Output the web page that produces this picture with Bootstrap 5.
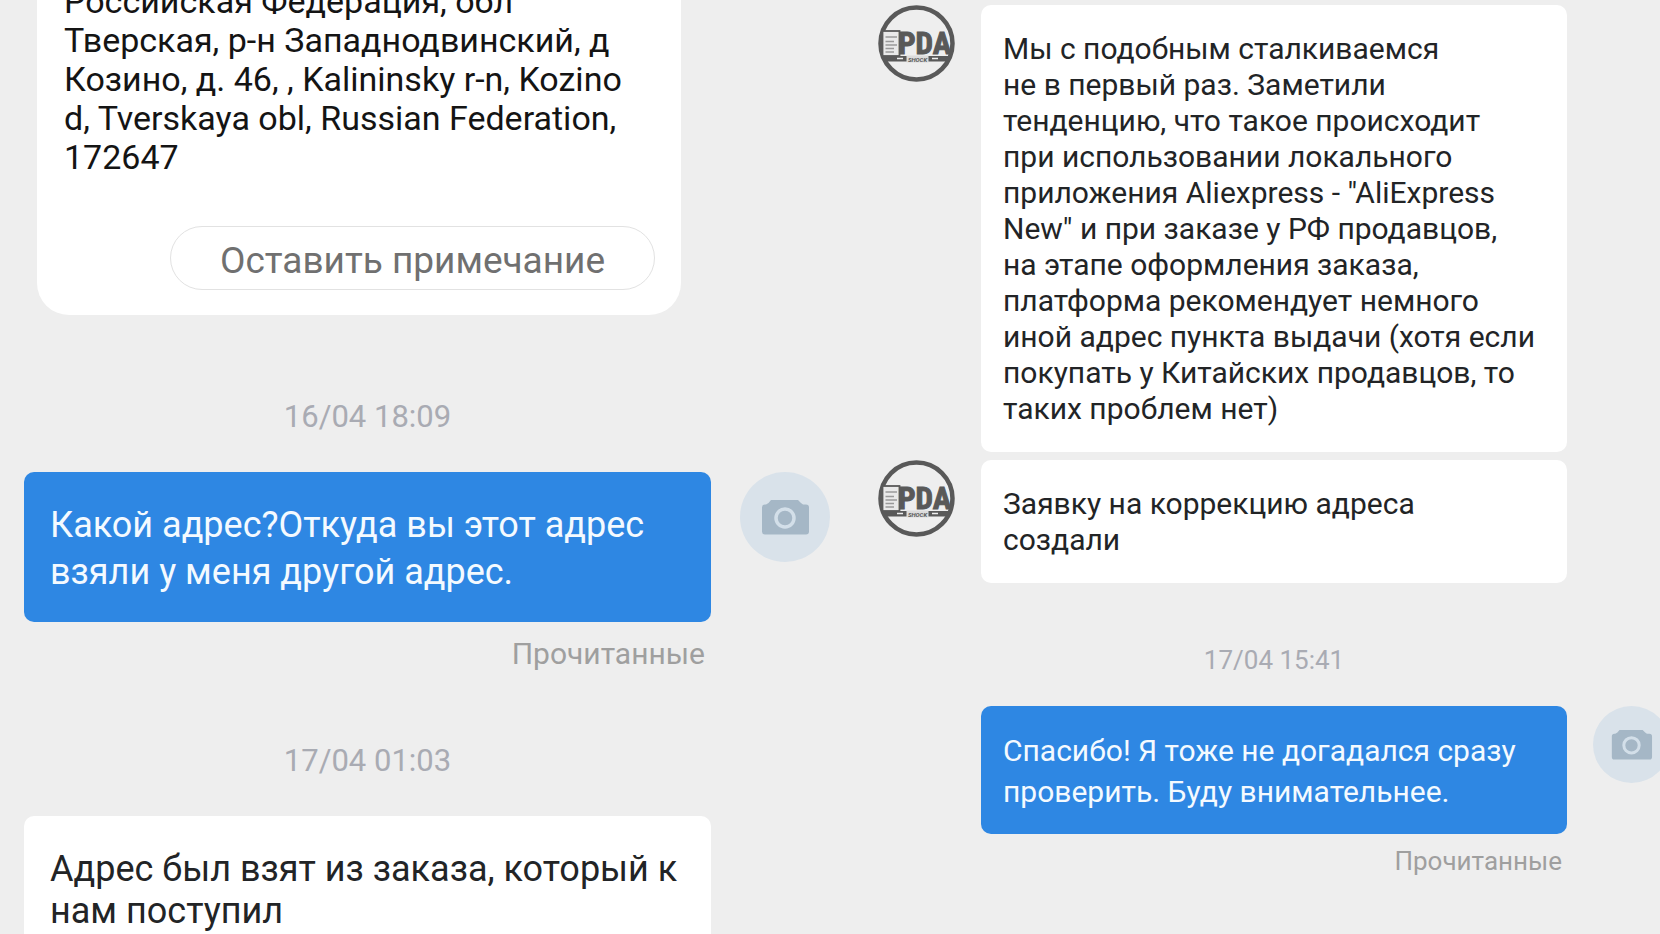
<!DOCTYPE html>
<html lang="ru">
<head>
<meta charset="utf-8">
<meta name="viewport" content="width=device-width, initial-scale=1">
<title>Переписка с продавцом</title>
<link href="https://cdn.jsdelivr.net/npm/bootstrap@5.3.0/dist/css/bootstrap.min.css" rel="stylesheet">
<style>
  body { background: #eee; font-family: Roboto, "Noto Sans", sans-serif; color: #222426; }
  .screens { height: 100vh; }
  .thread-a { padding-left: 24px; font-size: 36px; line-height: 42px; }
  .thread-b { padding: 5px 0 0 48px; margin-right: -10px; font-size: 30px; line-height: 36px; }
  .msg { display: grid; }
  .thread-a .msg { grid-template-columns: 1fr 90px; column-gap: 29px; }
  .thread-b .msg { grid-template-columns: 77px 1fr 77px; column-gap: 26px; }
  .bubble { background: #fff; border-radius: 10px; }
  .thread-a .bubble { padding: 32px 20px 28px 26px; }
  .thread-b .bubble { padding: 26px 16px 25px 22px; }
  .bubble.mine { background: #2e87e3; color: #f4faff; }
  .thread-a .mine { padding-top: 30px; padding-bottom: 26px; line-height: 47px; }
  .thread-b .mine { padding-top: 24px; padding-bottom: 22px; line-height: 41px; }
  .order { margin: -18px 30px 0 13px; padding: 0 26px 25px 27px; background: #fff; color: #141414; border-radius: 0 0 32px 32px; font-size: 34px; line-height: 39px; }
  .note-btn { width: 485px; height: 64px; margin-top: 49px; padding: 5px 0 0; border: 1px solid #e2e2e2; border-radius: 32px; background: #fff; color: #707070; font-size: 37px; line-height: 40px; }
  .stamp { color: #a9abb3; text-align: center; }
  .state { color: #9f9f9f; text-align: right; padding-right: 6px; }
  .thread-a .stamp { font-size: 31px; line-height: 36px; }
  .thread-a .state { font-size: 30px; line-height: 36px; margin-top: 14px; }
  .thread-b .stamp, .thread-b .state { font-size: 26px; line-height: 30px; }
  .thread-b .state { margin-top: 12px; padding-right: 5px; }
  .gap-order { margin-top: 84px; }
  .gap-day-a { margin-top: 71px; }
  .gap-day-b { margin-top: 62px; }
  .thread-a .gap-msg { margin-top: 37px; }
  .thread-b .gap-msg { margin-top: 31px; }
</style>
</head>
<body>
<svg class="d-none" aria-hidden="true">
  <symbol id="camera" viewBox="0 0 90 90">
    <circle cx="45" cy="45" r="45" fill="#d9e2ea"/>
    <path d="M25 32.500h1l2.500-1.500 2.500-3h27l3 3 2 1.500h3a3 3 0 0 1 3 3v24a3 3 0 0 1-3 3H25a3 3 0 0 1-3-3v-24a3 3 0 0 1 3-3z" fill="#a5b7c6"/>
    <circle cx="45" cy="46" r="9" fill="#a5b7c6" stroke="#d3dfe9" stroke-width="3.500"/>
  </symbol>
  <symbol id="shop" viewBox="0 0 77 77">
    <circle cx="38.500" cy="38.500" r="36" fill="none" stroke="#595959" stroke-width="4.500"/>
    <path d="M4 51h69l-5 5.500H9z" fill="#595959"/>
    <rect x="4.500" y="26" width="17" height="25" fill="#e9e9e9" stroke="#595959" stroke-width="1.800"/>
    <path d="M7.500 32h11.500M7.500 36.500h8.500M7.500 40h11.500M7.500 43.500h8.500M7.500 47h8.500" stroke="#999" stroke-width="1.500"/>
    <text x="20" y="48.500" font-family="Liberation Sans Narrow, Roboto Condensed, Roboto, sans-serif" font-weight="700" font-size="31" fill="#595959" stroke="#595959" stroke-width="1">PDA</text>
    <path d="M28.500 50.500h22v7h-22z" fill="#dcdcdc"/>
    <text x="39.500" y="56.500" text-anchor="middle" font-family="Roboto, sans-serif" font-weight="700" font-style="italic" font-size="6" fill="#595959">SHOCK</text>
    <path d="M19 53.500h6M54 53.500h6" stroke="#eee" stroke-width="1.500"/>
  </symbol>
</svg>

<main class="container-fluid p-0 overflow-hidden screens">
  <div class="row g-0">
    <section class="col-6">
      <div class="thread-a">
        <article class="msg">
          <div class="order d-flex flex-column align-items-end">
            <div class="align-self-stretch">Российская Федерация, обл<br>Тверская, р-н Западнодвинский, д<br>Козино, д. 46, , Kalininsky r-n, Kozino<br>d, Tverskaya obl, Russian Federation,<br>172647</div>
            <button type="button" class="note-btn mw-100">Оставить примечание</button>
          </div>
        </article>
        <div class="msg gap-order"><time class="stamp">16/04 18:09</time></div>
        <article class="msg gap-msg">
          <div class="bubble mine">Какой адрес?Откуда вы этот адрес<br>взяли у меня другой адрес.</div>
          <svg width="90" height="90" role="img" aria-label="Фото"><use href="#camera"/></svg>
        </article>
        <div class="msg"><div class="state">Прочитанные</div></div>
        <div class="msg gap-day-a"><time class="stamp">17/04 01:03</time></div>
        <article class="msg gap-msg">
          <div class="bubble">Адрес был взят из заказа, который к<br>нам поступил</div>
        </article>
      </div>
    </section>

    <section class="col-6">
      <div class="thread-b">
        <article class="msg">
          <svg width="77" height="77" role="img" aria-label="PDA"><use href="#shop"/></svg>
          <div class="bubble">Мы с подобным сталкиваемся<br>не в первый раз. Заметили<br>тенденцию, что такое происходит<br>при использовании локального<br>приложения Aliexpress - "AliExpress<br>New" и при заказе у РФ продавцов,<br>на этапе оформления заказа,<br>платформа рекомендует немного<br>иной адрес пункта выдачи (хотя если<br>покупать у Китайских продавцов, то<br>таких проблем нет)</div>
        </article>
        <article class="msg mt-2">
          <svg width="77" height="77" role="img" aria-label="PDA"><use href="#shop"/></svg>
          <div class="bubble">Заявку на коррекцию адреса<br>создали</div>
        </article>
        <div class="msg gap-day-b"><span></span><time class="stamp">17/04 15:41</time></div>
        <article class="msg gap-msg">
          <span></span>
          <div class="bubble mine">Спасибо! Я тоже не догадался сразу<br>проверить. Буду внимательнее.</div>
          <svg width="77" height="77" role="img" aria-label="Фото"><use href="#camera"/></svg>
        </article>
        <div class="msg"><span></span><div class="state">Прочитанные</div></div>
      </div>
    </section>
  </div>
</main>
<script src="https://cdn.jsdelivr.net/npm/bootstrap@5.3.0/dist/js/bootstrap.bundle.min.js"></script>
</body>
</html>
